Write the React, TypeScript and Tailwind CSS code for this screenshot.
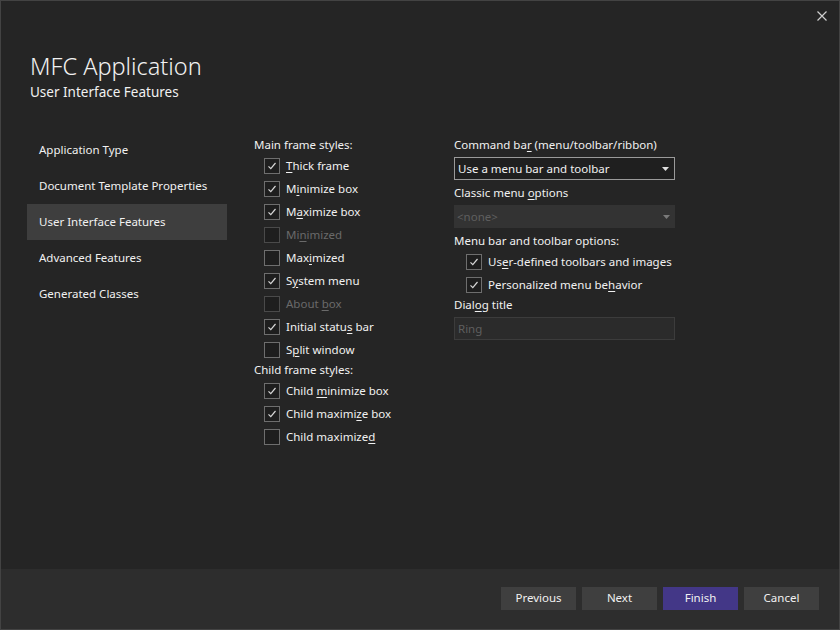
import React from 'react';

const font = { fontFamily: '"Noto Sans", "Open Sans", sans-serif' };

const Key: React.FC<{ label: string; k: number }> = ({ label, k }) => (
  <span className="whitespace-pre">
    {label.slice(0, k)}
    <span className="underline underline-offset-2">{label[k]}</span>
    {label.slice(k + 1)}
  </span>
);

const CheckRow: React.FC<{ label: string; k: number; checked?: boolean; disabled?: boolean }> = ({
  label,
  k,
  checked,
  disabled,
}) => (
  <div className="flex h-[23px] items-center gap-[6px] whitespace-nowrap">
    <div
      className={`flex h-4 w-4 shrink-0 items-center justify-center border bg-[#1e1e1e] ${
        disabled ? 'border-[#4a4a4a]' : 'border-[#6e6e6e]'
      }`}
    >
      {checked && (
        <svg width="12" height="12" viewBox="0 0 12 12">
          <path d="M2.5 6.3 L4.8 8.6 L9.5 3" fill="none" stroke="#d6d6d6" strokeWidth="1.2" />
        </svg>
      )}
    </div>
    <span className={disabled ? 'text-[#6a6a6a]' : 'text-[#f1f1f1]'}>
      <Key label={label} k={k} />
    </span>
  </div>
);

const Arrow = ({ color }: { color: string }) => (
  <svg width="7" height="4" viewBox="0 0 7 4">
    <path d="M0 0 H7 L3.5 4 Z" fill={color} />
  </svg>
);

const navItems = [
  'Application Type',
  'Document Template Properties',
  'User Interface Features',
  'Advanced Features',
  'Generated Classes',
];

export default function App() {
  return (
    <div
      className="flex h-[630px] w-[840px] flex-col border border-[#434343] bg-[#252525] text-[11.5px] text-[#f1f1f1]"
      style={font}
    >
      <div className="relative flex flex-1 flex-col">
        <button className="absolute right-[12px] top-[10px] text-[#cfcfcf]">
          <svg width="10" height="10" viewBox="0 0 10 10">
            <path d="M0.5 0.5 L9.5 9.5 M9.5 0.5 L0.5 9.5" stroke="#cfcfcf" strokeWidth="1.2" />
          </svg>
        </button>

        <div className="pl-[29px] pt-[49px]">
          <h1 className="text-[23.5px] font-light leading-[32px] text-[#f1f1f1]">MFC Application</h1>
          <h2 className="text-[13.5px] leading-[20px] text-[#f1f1f1]">User Interface Features</h2>
        </div>

        <div className="mt-[30px] flex">
          <nav className="ml-[26px] flex w-[200px] flex-col">
            {navItems.map((item) => (
              <div
                key={item}
                className={`flex h-[36px] items-center pl-[12px] ${
                  item === 'User Interface Features' ? 'bg-[#3e3e3e]' : ''
                }`}
              >
                {item}
              </div>
            ))}
          </nav>

          <div className="ml-[27px] mt-[4px] flex w-[200px] flex-col">
            <div className="flex h-[18px] items-center">Main frame styles:</div>
            <div className="flex flex-col pl-[10px]">
              <CheckRow label="Thick frame" k={0} checked />
              <CheckRow label="Minimize box" k={1} checked />
              <CheckRow label="Maximize box" k={1} checked />
              <CheckRow label="Minimized" k={2} disabled />
              <CheckRow label="Maximized" k={3} />
              <CheckRow label="System menu" k={1} checked />
              <CheckRow label="About box" k={6} disabled />
              <CheckRow label="Initial status bar" k={13} checked />
              <CheckRow label="Split window" k={1} />
            </div>
            <div className="flex h-[18px] items-center">Child frame styles:</div>
            <div className="flex flex-col pl-[10px]">
              <CheckRow label="Child minimize box" k={6} checked />
              <CheckRow label="Child maximize box" k={12} checked />
              <CheckRow label="Child maximized" k={14} />
            </div>
          </div>

          <div className="mt-[4px] flex w-[221px] flex-col">
            <div className="flex h-[18px] items-center">
              <Key label="Command bar (menu/toolbar/ribbon)" k={10} />
            </div>
            <div className="mt-[3px] flex h-[23px] items-center justify-between border border-[#9a9a9a] bg-[#1f1f1f] pl-[3px] pr-[5px]">
              <span>Use a menu bar and toolbar</span>
              <Arrow color="#e0e0e0" />
            </div>
            <div className="mt-[4px] flex h-[18px] items-center">
              <Key label="Classic menu options" k={13} />
            </div>
            <div className="mt-[3px] flex h-[23px] items-center justify-between bg-[#333333] pl-[3px] pr-[5px] text-[#5f5f5f]">
              <span>&lt;none&gt;</span>
              <Arrow color="#7a7a7a" />
            </div>
            <div className="mt-[4px] flex h-[18px] items-center">Menu bar and toolbar options:</div>
            <div className="flex flex-col pl-[12px]">
              <CheckRow label="User-defined toolbars and images" k={2} checked />
              <CheckRow label="Personalized menu behavior" k={20} checked />
            </div>
            <div className="flex h-[18px] items-center">
              <Key label="Dialog title" k={4} />
            </div>
            <div className="mt-[3px] flex h-[23px] items-center border border-[#3c3c3c] bg-[#2b2b2b] pl-[3px] text-[#5f5f5f]">
              Ring
            </div>
          </div>
        </div>
      </div>

      <div className="flex h-[60px] items-center justify-end gap-[6px] bg-[#2d2d2d] pb-[2px] pr-[20px]">
        <button className="h-[23px] w-[75px] bg-[#3f3f3f] text-[#f1f1f1]">Previous</button>
        <button className="h-[23px] w-[75px] bg-[#3f3f3f] text-[#f1f1f1]">Next</button>
        <button className="h-[23px] w-[75px] bg-[#433787] text-[#f1f1f1]">Finish</button>
        <button className="h-[23px] w-[75px] bg-[#3f3f3f] text-[#f1f1f1]">Cancel</button>
      </div>
    </div>
  );
}
